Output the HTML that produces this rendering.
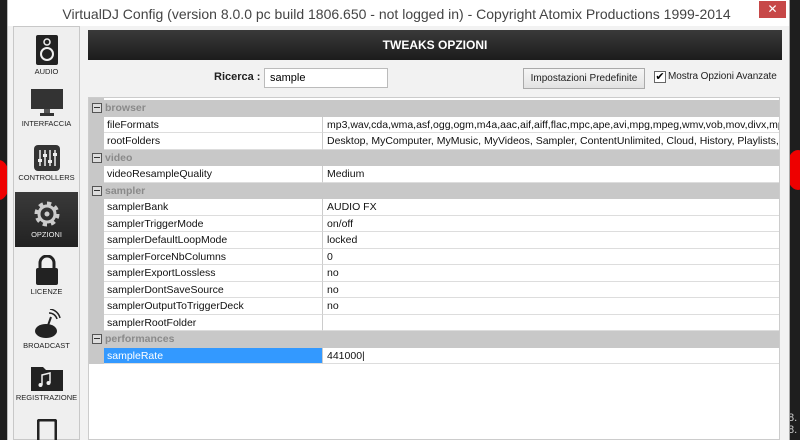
<!DOCTYPE html>
<html><head><style>
*{margin:0;padding:0;box-sizing:border-box}
html,body{width:800px;height:440px;overflow:hidden}
body{background:#1e1e1e;font-family:"Liberation Sans",sans-serif;position:relative}
.win{position:absolute;left:7px;top:0;width:783px;height:440px;background:#f2f2f2;border-left:1px solid #bbb;border-right:1px solid #aaa}
.title{position:absolute;left:0;top:0;width:100%;height:26px;background:#fff;text-align:center;font-size:14px;color:#444;line-height:28px;padding-right:4px}
.close{position:absolute;left:751px;top:1px;width:27px;height:17px;background:#c74848;color:#fff;font-size:12px;text-align:center;line-height:17px}
.side{position:absolute;left:5px;top:26px;width:67px;height:414px;background:#efefef;border:1px solid #c8c8c8}
.it{position:absolute;left:1px;width:63px;text-align:center;font-size:7.5px;color:#222}
.sel{background:linear-gradient(#3a3a3a,#222);color:#eee}
.hdr{position:absolute;left:80px;top:30px;width:694px;height:30px;background:linear-gradient(#3a3a3a,#1c1c1c);color:#fff;font-weight:bold;font-size:12px;text-align:center;line-height:30px}
.grid{position:absolute;left:80px;top:97px;width:692px;height:343px;background:#fff;border:1px solid #ccc}
.row{position:absolute;left:0;height:16.5px;width:690px;font-size:10.5px;color:#111}
.g{background:#c8c8c8;color:#8a8a8a;font-weight:bold}
.g span{position:absolute;left:16px;top:2px}
.g i{position:absolute;left:3px;top:3px;width:10px;height:10px;border:1px solid #555;background:#ddd}
.g i:after{content:"";position:absolute;left:1px;top:3px;width:6px;height:1px;background:#333}
.n{position:absolute;left:15px;top:0;width:219px;height:16.5px;background:#fff;border-bottom:1px solid #ddd;border-right:1px solid #ccc;padding:2px 0 0 3px;white-space:nowrap}
.v{position:absolute;left:234px;top:0;width:456px;height:16.5px;background:#fff;border-bottom:1px solid #ddd;padding:2px 0 0 4px;white-space:nowrap;overflow:hidden}
.gut{position:absolute;left:0;top:0;width:15px;height:266px;background:#c8c8c8}
</style></head><body>
<div style="position:absolute;left:-12px;top:160px;width:22px;height:40px;border-radius:50%;background:#e00"></div>
<div style="position:absolute;left:786px;top:150px;width:24px;height:40px;border-radius:50%;background:#e00"></div>
<div style="position:absolute;left:788px;top:412px;color:#ccc;font-size:11px">8.<br>8.</div>
<div class="win">
<div class="title">VirtualDJ Config (version 8.0.0 pc build 1806.650 - not logged in) - Copyright Atomix Productions 1999-2014</div>
<div class="close">✕</div>
<div class="side">
 <div class="it" style="top:8px;height:55px"><svg width="22" height="30" viewBox="0 0 22 30"><rect width="22" height="30" rx="2" fill="#222"/><circle cx="11" cy="7" r="3" fill="none" stroke="#eee" stroke-width="1.5"/><circle cx="11" cy="19" r="6" fill="none" stroke="#eee" stroke-width="2"/></svg><br>AUDIO</div>
 <div class="it" style="top:62px;height:55px"><svg width="32" height="28" viewBox="0 0 32 28"><rect width="32" height="20" fill="#333"/><rect x="13" y="20" width="6" height="4" fill="#555"/><rect x="9" y="24" width="14" height="3" fill="#333"/></svg><br>INTERFACCIA</div>
 <div class="it" style="top:118px;height:55px"><svg width="26" height="26" viewBox="0 0 26 26"><rect width="26" height="26" rx="4" fill="#333"/><path d="M6 5v16M11 5v16M16 5v16M21 5v16" stroke="#eee" stroke-width="1.5"/><rect x="4" y="14" width="4" height="3" fill="#eee"/><rect x="9" y="9" width="4" height="3" fill="#eee"/><rect x="14" y="15" width="4" height="3" fill="#eee"/><rect x="19" y="8" width="4" height="3" fill="#eee"/></svg><br>CONTROLLERS</div>
 <div class="it sel" style="top:165px;height:55px;padding-top:8px"><svg width="28" height="28" viewBox="0 0 28 28"><circle cx="14" cy="14" r="10" fill="none" stroke="#ccc" stroke-width="5" stroke-dasharray="4 3.8"/><circle cx="14" cy="14" r="8" fill="none" stroke="#ccc" stroke-width="3"/><circle cx="14" cy="14" r="2.5" fill="#ccc"/></svg><br>OPZIONI</div>
 <div class="it" style="top:228px;height:55px"><svg width="24" height="30" viewBox="0 0 24 30"><path d="M5 13V8a7 7 0 0 1 14 0v5" fill="none" stroke="#222" stroke-width="3"/><rect x="1" y="13" width="22" height="17" rx="2" fill="#222"/></svg><br>LICENZE</div>
 <div class="it" style="top:282px;height:55px"><svg width="28" height="30" viewBox="0 0 28 30"><ellipse cx="13" cy="22" rx="11" ry="7" fill="#222"/><path d="M13 22L18 8" stroke="#222" stroke-width="2"/><path d="M16 4a8 8 0 0 1 8 6M17 0a12 12 0 0 1 10 9" fill="none" stroke="#222" stroke-width="1.5"/></svg><br>BROADCAST</div>
 <div class="it" style="top:338px;height:55px"><svg width="32" height="26" viewBox="0 0 32 26"><path d="M0 2h12l3 3h17v21H0z" fill="#222"/><path d="M11 20V10l8-2v10" stroke="#eee" stroke-width="1.5" fill="none"/><circle cx="9.5" cy="20" r="2" fill="#eee"/><circle cx="17.5" cy="18" r="2" fill="#eee"/></svg><br>REGISTRAZIONE</div>
 <div class="it" style="top:392px;height:30px"><svg width="20" height="24" viewBox="0 0 20 24"><rect x="1" y="1" width="18" height="28" rx="2" fill="none" stroke="#222" stroke-width="3"/></svg></div>
</div>
<div class="hdr">TWEAKS OPZIONI</div>
<div style="position:absolute;left:206px;top:71px;font-weight:bold;font-size:11px;color:#222">Ricerca :</div>
<div style="position:absolute;left:256px;top:68px;width:124px;height:20px;background:#fff;border:1px solid #bbb;font-size:11px;padding:3px 0 0 5px">sample</div>
<div style="position:absolute;left:515px;top:68px;width:122px;height:21px;background:linear-gradient(#f6f6f6,#e2e2e2);border:1px solid #aaa;font-size:10px;text-align:center;line-height:19px;color:#222">Impostazioni Predefinite</div>
<div style="position:absolute;left:646px;top:71px;width:12px;height:12px;background:#fff;border:1px solid #666;font-size:11px;line-height:10px;text-align:center">✔</div>
<div style="position:absolute;left:660px;top:71px;font-size:10px;color:#222;letter-spacing:-0.1px">Mostra Opzioni Avanzate</div>
<div class="grid">
<div class="gut"></div>
<div class="row g" style="top:2px"><i></i><span>browser</span></div>
<div class="row" style="top:18.5px"><div class="n">fileFormats</div><div class="v">mp3,wav,cda,wma,asf,ogg,ogm,m4a,aac,aif,aiff,flac,mpc,ape,avi,mpg,mpeg,wmv,vob,mov,divx,mp4,m</div></div>
<div class="row" style="top:35px"><div class="n">rootFolders</div><div class="v">Desktop, MyComputer, MyMusic, MyVideos, Sampler, ContentUnlimited, Cloud, History, Playlists, Live</div></div>
<div class="row g" style="top:51.5px"><i></i><span>video</span></div>
<div class="row" style="top:68px"><div class="n">videoResampleQuality</div><div class="v">Medium</div></div>
<div class="row g" style="top:84.5px"><i></i><span>sampler</span></div>
<div class="row" style="top:101px"><div class="n">samplerBank</div><div class="v">AUDIO FX</div></div>
<div class="row" style="top:117.5px"><div class="n">samplerTriggerMode</div><div class="v">on/off</div></div>
<div class="row" style="top:134px"><div class="n">samplerDefaultLoopMode</div><div class="v">locked</div></div>
<div class="row" style="top:150.5px"><div class="n">samplerForceNbColumns</div><div class="v">0</div></div>
<div class="row" style="top:167px"><div class="n">samplerExportLossless</div><div class="v">no</div></div>
<div class="row" style="top:183.5px"><div class="n">samplerDontSaveSource</div><div class="v">no</div></div>
<div class="row" style="top:200px"><div class="n">samplerOutputToTriggerDeck</div><div class="v">no</div></div>
<div class="row" style="top:216.5px"><div class="n">samplerRootFolder</div><div class="v"></div></div>
<div class="row g" style="top:233px"><i></i><span>performances</span></div>
<div class="row" style="top:249.5px"><div class="n" style="background:#3399ff;color:#fff">sampleRate</div><div class="v">441000|</div></div>
</div>
</div>
</body></html>
